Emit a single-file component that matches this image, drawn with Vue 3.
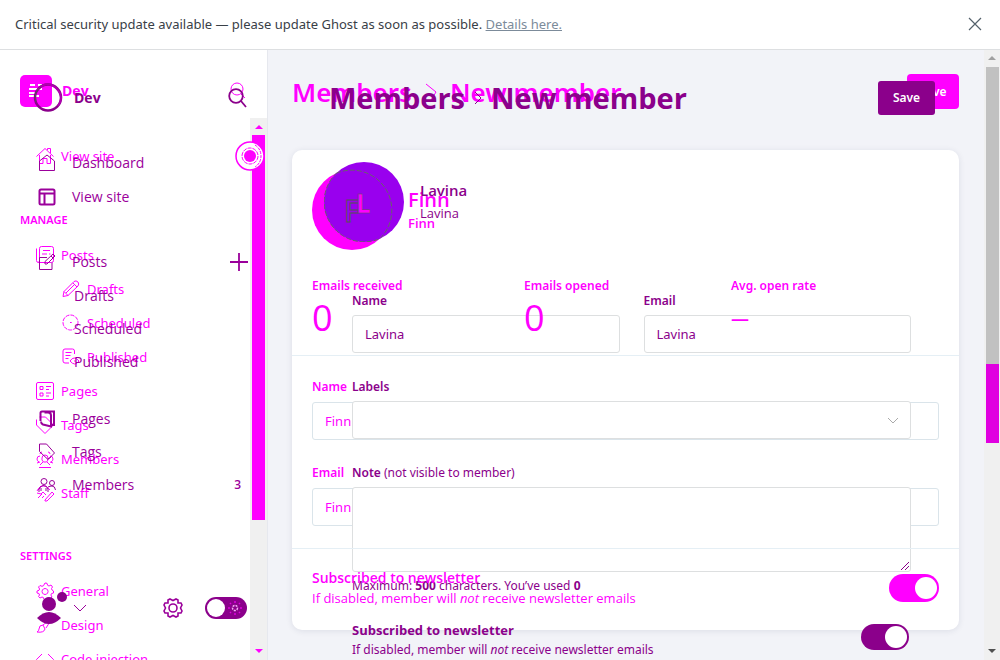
<script setup>
import { ref } from 'vue'

const finnName = ref('Finn')
const finnEmail = ref('Finn')
const name = ref('Lavina')
const email = ref('Lavina')
const note = ref('')

const icons = {
  house: 'M.5 9.5 9 1.5l8.500 8M3.500 8v8.500h3.500v-5h4v5h3.500V8M11.500 3V1.500h3v4.500',
  posts: 'M3.500 14.500V2.500q0-2 2-2h10q2 0 2 2v12q0 2-2 2h-13q-2 0-2-2v-12M3.500 14.500q0 2-1.500 2M7 4.500h7M6 8h5M13 8h1.500M7 11.500h4',
  pages: 'M2 .5h14q1.500 0 1.500 1.500v14q0 1.500-1.500 1.500H2Q.5 17.500.5 16V2Q.5.500 2 .5zM4 4.500h3v3H4zM4 11h3v3H4zM10 4.500h5M10 7.500h3M10 11h5M10 14h3',
  tag: 'M.5 3.500v5.500l8.500 8.500 8.500-8.500L9.500 1H3.500M4 4.500h1',
  people: 'M6 8a3 3 0 1 1 6 0v2l-1.500 2h-3L6 10zM3 12q-2-1-2-3 0-3 3-3M15 12q2-1 2-3 0-3-3-3M1 13l3-1M17 13l-3-1M3 17.500h12M4 15l3-3M14 15l-3-3M4 4q0-2 2-2M14 4q0-2-2-2',
  staff: 'M1 7q3-6 9-5l4 4M1 9l4 1 2-2 3 3M2 14l4-4M9 16l7-8 2 2-7 7H9zM2 6l3-4M6 14l2-2',
  gear: 'M9 1l2 .3.6 2 1.400.7L15 3l1.500 2-1 1.500.5 1.500 1.500 1v2l-2 .6-.6 1.400L16 15l-2 1.500-1.500-1-1.500.5-1 1.500H8l-.6-2L6 15l-2 1-1.500-1.500L3.500 13 3 11.500 1 11V9l2-.7L3.600 7 2.500 5 4 3.500l2 .8 1.500-.6zM9 6.500a3 3 0 1 0 .1 0z',
  brush: 'M17 1 7 9M17 1l-7 11M7 9q-4 0-4 4 0 2-2 3 7 1 8-3z',
  code: 'M6 4 .5 9.500 6 15M12 4l5.500 5.500L12 15',
  pencil: 'M1 16.500l1-5L12 1.500q2-1.500 4 .5 1.500 2 0 4L6 15.500zM2 11.500l4 4M11 3l4 4M4 13l9-9',
  clock: 'M16 8.500a7.500 7.500 0 1 1-15 0 7.500 7.500 0 0 1 15 0M8 8.500h1.500v.5',
  published: 'M12.500 6V3q0-2-2-2H3Q1 1 1 3v10q0 2 2 2h4M3.500 4.500h6M3.500 7.500h5M3.500 10.500h3M8 13q4-6 9 0-4 6-9 0M12 13h2',
  home: 'M1.500 7 9 1l7.500 6v9.500h-15z',
  layout: 'M3 1.500h12q1.500 0 1.500 1.500v12q0 1.500-1.500 1.500H3q-1.500 0-1.500-1.500V3Q1.500 1.500 3 1.500zM2 5.500h14M6.500 6v10',
  edit: 'M9 4.500H1.500v12h12.500V9.500M15 1l2 2-8 8H7V8.500zM13 3l2 2',
  copies: 'M2.500 11V3q0-1.500 1.500-1.500h12v13.500h-3M6.500 2.500h3.500q3 0 3 3v11l-8-2q-2-1-2-3',
  label: 'M1.500 1h7l8 9-6.500 6.500L1.500 8.500zM10 16l3-2',
  members: 'M3 5.500a3 3 0 1 1 6 0 3 3 0 0 1-6 0M11.500 7a2.500 2.500 0 1 1 5 0 2.500 2.500 0 0 1-5 0M1 16v-3q1-3 4-3.500 4 0 5 3.500v3M10 11q2-1 4-1 3 0 3.500 4M3 12v3M8 12v3'
}

const outerNav = [
  { label: 'Posts', icon: 'posts' },
  { label: 'Drafts', icon: 'pencil', sub: true },
  { label: 'Scheduled', icon: 'clock', sub: true },
  { label: 'Published', icon: 'published', sub: true },
  { label: 'Pages', icon: 'pages' },
  { label: 'Tags', icon: 'tag' },
  { label: 'Members', icon: 'people' },
  { label: 'Staff', icon: 'staff' }
]
const settingsNav = [
  { label: 'General', icon: 'gear' },
  { label: 'Design', icon: 'brush' },
  { label: 'Code injection', icon: 'code' }
]
const innerTop = [
  { label: 'Dashboard', icon: 'home' },
  { label: 'View site', icon: 'layout', bold: true }
]
const innerPosts = ['Drafts', 'Scheduled', 'Published']
const innerBottom = [
  { label: 'Pages', icon: 'copies', bold: true },
  { label: 'Tags', icon: 'label' },
  { label: 'Members', icon: 'members', count: 3 }
]
</script>

<template>
  <div class="app">
    <aside class="banner">
      <p>Critical security update available — please update Ghost as soon as possible. <a href="#">Details here.</a></p>
      <button class="plain" aria-label="Close">
        <svg width="14" height="14" viewBox="0 0 14 14" fill="none" stroke="#54616b" stroke-width="1.2"><path d="M1 1l12 12M13 1L1 13" /></svg>
      </button>
    </aside>

    <div class="body">
      <div class="sidebar">
        <div class="side-scroll">
          <span class="arrow up"></span>
          <span class="thumb"></span>
          <span class="arrow down"></span>
        </div>

        <div class="layer outer">
          <header class="brand">
            <svg width="32" height="32" viewBox="0 0 32 32"><rect width="32" height="32" rx="5" fill="#f0f" /><path d="M10 10h5M18 10h4M9 14h13M9 18h8M9 21h10" stroke="#fff" stroke-width="2" /></svg>
            <strong>Dev</strong>
            <button class="plain push" aria-label="Search site">
              <svg width="16" height="18" viewBox="0 0 16 18" fill="none" stroke="#f0f"><circle cx="7" cy="7" r="6" /><path d="M11 12l4 4" /></svg>
            </button>
          </header>
          <nav>
            <a href="#" class="item view">
              <svg class="icon" viewBox="0 0 18 18"><path :d="icons.house" /></svg>View site
              <svg class="target" width="30" height="30" viewBox="0 0 30 30">
                <circle cx="15" cy="15" r="14" fill="#fff" stroke="#f0f" stroke-width="1.500" />
                <path d="M20 4q6 4 6 11t-6 11" fill="none" stroke="#f0f" stroke-dasharray="3 1" />
                <circle cx="15" cy="15" r="8" fill="none" stroke="#f0f" stroke-dasharray="4 1" />
                <circle cx="15" cy="15" r="6" fill="#f0f" />
              </svg>
            </a>
            <h2>MANAGE</h2>
            <a v-for="item in outerNav" :key="item.label" href="#" class="item" :class="{ sub: item.sub }">
              <svg class="icon" viewBox="0 0 18 18"><path :d="icons[item.icon]" :stroke-dasharray="item.icon === 'clock' ? '4 1' : null" /></svg>{{ item.label }}
            </a>
            <h2 class="settings">SETTINGS</h2>
            <a v-for="item in settingsNav" :key="item.label" href="#" class="item">
              <svg class="icon" viewBox="0 0 18 18"><path :d="icons[item.icon]" /></svg>{{ item.label }}
            </a>
          </nav>
        </div>

        <div class="layer inner">
          <header class="brand">
            <svg width="31" height="31" viewBox="0 0 31 31" fill="none"><circle cx="15" cy="15.500" r="13" stroke="#8b008b" stroke-width="2.500" /><path d="M4 9q9-12 19-3 9 9 2 18" stroke="#b000b0" stroke-width="2" /><path d="M3 20Q0 10 8 5" stroke="#555" /></svg>
            <strong>Dev</strong>
            <button class="plain push" aria-label="Search">
              <svg width="19" height="20" viewBox="0 0 19 20" fill="none" stroke="#8b008b" stroke-width="1.800"><circle cx="8" cy="8" r="6.800" /><path d="M13 13l5 6" /></svg>
            </button>
          </header>
          <nav>
            <a v-for="item in innerTop" :key="item.label" href="#" class="item">
              <svg class="icon" :class="{ bold: item.bold }" viewBox="0 0 18 18"><path :d="icons[item.icon]" /></svg>{{ item.label }}
            </a>
            <div class="item posts">
              <a href="#"><svg class="icon" viewBox="0 0 18 18"><path :d="icons.edit" /></svg>Posts</a>
              <button class="plain push" aria-label="New post">
                <svg width="18" height="18" viewBox="0 0 18 18" stroke="#9b009b" stroke-width="1.800"><path d="M9 0v18M0 9h18" /></svg>
              </button>
            </div>
            <a v-for="label in innerPosts" :key="label" href="#" class="item sub">{{ label }}</a>
            <div class="group">
              <a v-for="item in innerBottom" :key="item.label" href="#" class="item">
                <svg class="icon" :class="{ bold: item.bold }" viewBox="0 0 18 18"><path :d="icons[item.icon]" /></svg>{{ item.label }}
                <span v-if="item.count" class="count">{{ item.count }}</span>
              </a>
            </div>
          </nav>
          <footer>
            <button class="plain user" aria-label="Account">
              <svg width="50" height="36" viewBox="0 0 50 36"><circle cx="12" cy="14" r="7" fill="#8b008b" /><path d="M0 28q12-12 24 0-12 12-24 0" fill="#8b008b" /><circle cx="25" cy="7" r="5" fill="#8b008b" /><path d="M37 15l6 6 6-6" fill="none" stroke="#9b009b" /></svg>
            </button>
            <button class="plain gear" aria-label="Settings">
              <svg width="20" height="20" viewBox="0 0 20 20" fill="none" stroke="#9b009b" stroke-width="1.600"><path d="M7 1l3 1.500L13 1l2 1v3h3l1 2-1.500 3L19 13l-1 2h-3v3l-2 1-3-1.500L7 19l-2-1v-3H2l-1-2 1.500-3L1 7l1-2h3V2z" /><circle cx="10" cy="10" r="4" /></svg>
            </button>
            <label class="switch night">
              <input type="checkbox" aria-label="Night mode" />
              <span class="knob"></span>
              <svg width="14" height="14" viewBox="0 0 14 14" fill="none" stroke="#e000e0" stroke-width="1.500"><circle cx="7" cy="7" r="2.500" stroke="#f5b0f5" stroke-dasharray="2 1" /><path d="M7 0v2M7 12v2M0 7h2M12 7h2M2 2l1 1M11 11l1 1M12 2l-1 1M3 11l-1 1" /></svg>
            </label>
          </footer>
        </div>
      </div>

      <main>
        <section class="layer page">
          <header class="top">
            <h1><a href="#">Members</a><svg width="12" height="18" viewBox="0 0 12 18" fill="none" stroke="#f0f"><path d="M1 1l10 8-5 8" /></svg>New member</h1>
            <button class="save">Save</button>
          </header>
          <div class="card">
            <div class="summary">
              <div class="person">
                <span class="disc"></span>
                <div><h3>Finn</h3><p>Finn</p></div>
              </div>
              <dl>
                <div><dt>Emails received</dt><dd>0</dd></div>
                <div><dt>Emails opened</dt><dd>0</dd></div>
                <div><dt>Avg. open rate</dt><dd class="dash">—</dd></div>
              </dl>
            </div>
            <div class="form">
              <div class="field"><label for="finn-name">Name</label><input id="finn-name" v-model="finnName" type="text" /></div>
              <div class="field"><label for="finn-email">Email</label><input id="finn-email" v-model="finnEmail" type="text" /></div>
            </div>
            <div class="newsletter">
              <div><h4>Subscribed to newsletter</h4><p>If disabled, member will <em>not</em> receive newsletter emails</p></div>
              <label class="switch on"><input type="checkbox" checked aria-label="Subscribed to newsletter" /><span class="knob"></span></label>
            </div>
          </div>
        </section>

        <section class="layer detail">
          <header class="top">
            <h1><a href="#">Members</a><svg width="8" height="14" viewBox="0 0 8 14" fill="none" stroke="#8b008b"><path d="M1 1l6 6-6 6" /></svg>New member</h1>
            <button class="save">Save</button>
          </header>
          <div class="person">
            <svg width="80" height="80" viewBox="0 0 80 80">
              <circle cx="40" cy="40" r="40" fill="#9900ee" />
              <path d="M12.200 11.300A40 40 0 0 1 55.800 76.700A40 40 0 0 1 12.200 11.300" fill="none" stroke="#666" stroke-dasharray="5 2" />
              <text x="20" y="60" class="ghost-letter">F</text>
              <text x="32" y="51" class="letter">L</text>
            </svg>
            <div><h3>Lavina</h3><p>Lavina</p></div>
          </div>
          <form @submit.prevent>
            <div class="field"><label for="name">Name</label><input id="name" v-model="name" type="text" /></div>
            <div class="field"><label for="email">Email</label><input id="email" v-model="email" type="text" /></div>
            <div class="field wide">
              <label for="labels">Labels</label>
              <div class="control">
                <select id="labels"><option></option></select>
                <svg class="chevron" width="12" height="8" viewBox="0 0 12 8" fill="none" stroke="#aaa"><path d="M1 1l5 5 5-5" /></svg>
              </div>
            </div>
            <div class="field wide">
              <label for="note">Note <span>(not visible to member)</span></label>
              <div class="control">
                <textarea id="note" v-model="note"></textarea>
                <svg class="grip" width="10" height="10" viewBox="0 0 10 10" stroke="#8b008b"><path d="M1 9l8-8M5 9l4-4" /></svg>
              </div>
              <p class="help">Maximum: <b>500</b> characters. You’ve used <b>0</b></p>
            </div>
            <div class="newsletter wide">
              <div><h4>Subscribed to newsletter</h4><p>If disabled, member will <em>not</em> receive newsletter emails</p></div>
              <label class="switch on"><input type="checkbox" checked aria-label="Newsletter" /><span class="knob"></span></label>
            </div>
          </form>
        </section>
      </main>

      <div class="page-scroll">
        <span class="arrow up"></span>
        <span class="thumb"></span>
        <span class="extra"></span>
        <span class="arrow down"></span>
      </div>
    </div>
  </div>
</template>

<style>
body { margin: 0; }
</style>

<style scoped>
* { box-sizing: border-box; }
.app {
  display: flex;
  flex-direction: column;
  height: 100vh;
  overflow: hidden;
  font: 13px/20px "Noto Sans", "Open Sans", sans-serif;
  color: #f0f;
  background: #f2f3f8;
}
h1, h2, h3, h4, p, dl, dd { margin: 0; }
a { color: inherit; text-decoration: none; }
button, input, select, textarea { font: inherit; color: inherit; }
.plain { display: flex; padding: 0; border: 0; background: none; }
.push { margin-left: auto; }
svg { flex: none; }

.banner {
  display: flex;
  align-items: center;
  justify-content: space-between;
  flex: none;
  height: 50px;
  padding: 0 18px 2px 15px;
  background: #fff;
  border-bottom: 1px solid #dddfe1;
  color: #394047;
}
.banner a { color: #7c8b9a; text-decoration: underline; }

.body { display: flex; flex: 1; min-height: 0; }
.sidebar {
  display: grid;
  grid-template: 100% / 100%;
  flex: none;
  width: 268px;
  overflow: hidden;
  background: #fff;
  border-right: 1px solid #e6e8ee;
}
.layer { grid-area: 1 / 1; min-width: 0; }

.side-scroll, .page-scroll {
  display: flex;
  flex-direction: column;
  align-items: center;
  background: #f0f0f0;
}
.side-scroll { grid-area: 1 / 1; justify-self: end; width: 17px; margin-top: 68px; color: #f0f; }
.page-scroll { flex: none; width: 16px; color: #a0a0a0; }
.arrow { width: 0; border: 4px solid transparent; }
.up { margin: 3px 0 6px; border-bottom-color: currentColor; border-top-width: 2px; }
.down { margin: auto 0 3px; border-top-color: currentColor; }
.side-scroll .up { margin-top: 5px; margin-bottom: 4px; }
.side-scroll .thumb { flex: 0 0 71%; width: 13px; background: #f0f; margin-top: 2px; }
.page-scroll .up { margin-top: 4px; margin-bottom: 7px; }
.page-scroll .thumb { flex: 0 0 48.700%; width: 13px; background: #c1c1c1; }
.page-scroll .extra { flex: 0 0 13%; width: 13px; background: #e000e0; }
.page-scroll .down { border-top-color: #505050; }

.brand { display: flex; align-items: center; font-family: "Open Sans", sans-serif; }
.outer .brand { gap: 10px; padding: 25px 21px 0 20px; }
.brand strong { font-size: 14px; }
.inner .brand { gap: 10px; padding: 32px 20px 0 33px; color: #8b008b; }
.item {
  display: flex;
  align-items: center;
  height: 34px;
}
.icon { width: 18px; height: 18px; fill: none; stroke: currentColor; }
.bold { stroke-width: 2; }
.outer .item { gap: 7px; padding-left: 36px; }
.outer .item.sub { padding-left: 62px; }
.outer .view { margin-top: 32px; }
.target { margin-left: auto; margin-right: 2px; }
.outer h2 { margin: 37px 0 8px 20px; font-size: 11px; line-height: 20px; font-weight: 600; }
.outer h2.settings { margin-top: 36px; margin-bottom: 8px; }
.inner { display: flex; flex-direction: column; color: #9b009b; font-family: "Open Sans", sans-serif; font-size: 14px; }
.inner nav { margin-top: 33px; }
.inner .item { padding: 0 19px 0 38px; gap: 16px; }
.inner .item a { display: flex; align-items: center; gap: 16px; }
.inner .posts { margin-top: 31px; }
.inner .item.sub { padding-left: 74px; }
.inner .sub { height: 33px; }
.group { margin-top: 24px; }
.group .item { height: 33px; }
.count { margin-left: auto; padding-right: 7px; font-size: 12px; font-weight: 600; }
footer { display: flex; align-items: center; margin: auto 20px 34px 37px; }
.gear { margin-left: auto; margin-right: 22px; }

.switch {
  display: flex;
  align-items: center;
  position: relative;
  flex: none;
  background: #8b008b;
  border-radius: 16px;
}
.switch input { position: absolute; inset: 0; margin: 0; opacity: 0; width: 100%; height: 100%; }
.knob { border-radius: 50%; background: #fff; }
.night { width: 42px; height: 22px; padding: 0 5px 0 2px; justify-content: space-between; }
.night .knob { width: 18px; height: 18px; }
.on { width: 48px; height: 26px; padding-right: 2px; justify-content: flex-end; }
.on .knob { width: 22px; height: 22px; }
.page .on { width: 50px; height: 28px; background: #f0f; }

main { display: grid; grid-template: 100% / 100%; flex: 1; min-width: 0; overflow: hidden; }
.top { display: flex; justify-content: space-between; align-items: center; }
h1 { display: flex; align-items: center; line-height: 34px; white-space: nowrap; }
.page { padding: 24px 25px 0 24px; }
.page h1 { font-size: 26px; line-height: 32px; font-weight: 600; gap: 13px; }
.save { border: 0; color: #fff; font-size: 12px; font-weight: 600; }
.page .save { width: 52px; height: 35px; padding: 0 12px; border-radius: 4px; background: #f0f; }
.card {
  margin-top: 41px;
  background: #fff;
  border-radius: 10px;
  box-shadow: 0 1px 6px rgba(30, 40, 80, .1);
}
.person { display: flex; align-items: center; gap: 16px; font-family: "Open Sans", sans-serif; }
.summary { padding: 20px 20px 0; height: 206px; border-bottom: 1px solid #e5eff5; }
.disc { width: 80px; height: 80px; border-radius: 50%; background: #f0f; }
.page h3 { font-size: 20px; line-height: 26px; font-weight: 600; }
.page .person p { font-weight: 600; font-size: 13px; }
dl { display: grid; grid-template-columns: 212fr 207fr 208fr; margin-top: 26px; }
.summary dl, .newsletter { position: relative; z-index: 2; }
dt { font-size: 12px; font-weight: 600; }
dd { font: 36px/44px "Open Sans", sans-serif; }
dd.dash { font-size: 18px; font-weight: 600; }
.field { display: flex; flex-direction: column; min-width: 0; }
.field label { font-size: 12px; font-weight: 600; line-height: 20px; }
.field input, select, textarea {
  display: block;
  width: 100%;
  height: 38px;
  padding: 0 12px;
  border: 1px solid #dddfe0;
  border-radius: 3px;
  background: transparent;
  outline: 0;
}
.form { display: flex; flex-direction: column; gap: 23px; padding: 21px 20px 22px; }
.form .field { gap: 5px; }
.form input { border-color: #dae4ea; }
.page .newsletter { border-top: 1px solid #e5eff5; padding: 19px 20px 22px; }
.newsletter { display: flex; justify-content: space-between; align-items: center; font-size: 12px; }
h4 { font: 700 13px/20px "Open Sans", sans-serif; }
.page h4 { font-size: 14px; font-weight: 600; }
.page .newsletter p { font: 13px/20px "Open Sans", sans-serif; }

.detail { position: relative; z-index: 1; padding: 31px 49px 0 56px; color: #8b008b; }
.detail .top { margin-left: 5px; }
.detail h1 { font-family: "Open Sans", sans-serif; font-size: 29px; gap: 9px; }
.detail .save { width: 57px; height: 34px; padding: 0 12px; border-radius: 3px; background: #8b008b; }
.detail .person { margin-top: 47px; }
.detail h3 { font-size: 15px; line-height: 22px; font-weight: 600; }
.detail .person p { font-size: 13px; line-height: 24px; }
.ghost-letter { font-size: 30px; font-weight: 600; fill: none; stroke: #555; }
.letter { font-size: 26px; font-weight: 700; fill: #f0f; stroke: #555; stroke-width: 0.5; }
form { display: grid; grid-template-columns: 1fr 1fr; gap: 24px; margin: 49px 24px 0 28px; }
form .field { gap: 4px; }
.wide { grid-column: 1 / -1; }
form label span { font-weight: 400; }
.control { position: relative; }
select { appearance: none; background: #fff; }
textarea { height: 85px; resize: none; background: #fff; }
.chevron { position: absolute; right: 12px; top: 16px; }
.grip { position: absolute; right: 1px; bottom: 1px; }
.help { font-size: 12px; }
form .newsletter { padding-right: 2px; }
form .on { margin-bottom: 6px; }
</style>
